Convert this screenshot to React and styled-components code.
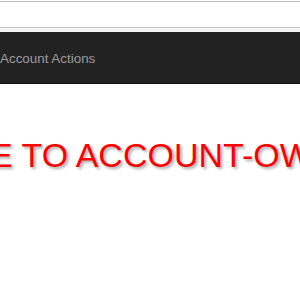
import React from "react";
import styled, { createGlobalStyle } from "styled-components";

const Global = createGlobalStyle`
  html, body { margin: 0; padding: 0; background: #ffffff; overflow: hidden; }
  body { font-family: "Liberation Sans", Arial, sans-serif; width: 300px; height: 300px; }
`;

const Page = styled.div`
  display: flex;
  flex-direction: column;
  width: 300px;
  height: 300px;
  overflow: hidden;
  padding-top: 1px;
  box-sizing: border-box;
`;

const AddressBar = styled.div`
  height: 25px;
  background: #ffffff;
  border-top: 1px solid #bdbdbd;
  border-bottom: 1px solid #c4c4c4;
`;

const Gap = styled.div`
  height: 4px;
  background: #f3f3f3;
`;

const Navbar = styled.nav`
  height: 52px;
  box-sizing: border-box;
  background: #222222;
  border-bottom: 1px solid #101010;
  padding-top: 20px;
  display: flex;
`;

const NavLink = styled.a`
  font-size: 13.4px;
  line-height: 13px;
  color: #9d9d9d;
  text-decoration: none;
  white-space: nowrap;
`;

const Main = styled.main`
  padding-top: 54px;
  display: flex;
`;

const Title = styled.h1`
  margin: 0 0 0 -10px;
  font-size: 34px;
  line-height: 34px;
  font-weight: 400;
  color: #ff0000;
  white-space: nowrap;
  text-shadow: 2px 2px 3px rgba(0, 0, 0, 0.35);
`;

export default function App() {
  return (
    <>
      <Global />
      <Page>
        <AddressBar />
        <Gap />
        <Navbar>
          <NavLink href="#">Account Actions</NavLink>
        </Navbar>
        <Main>
          <Title>E TO ACCOUNT-OW</Title>
        </Main>
      </Page>
    </>
  );
}
